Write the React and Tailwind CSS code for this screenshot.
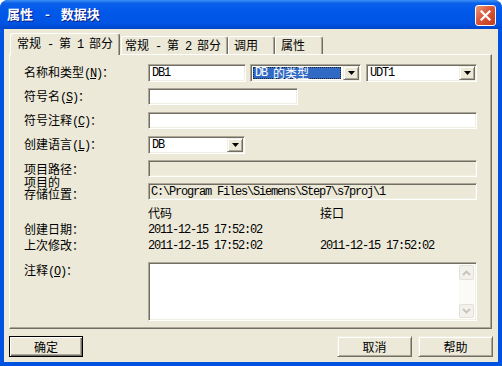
import React from 'react';

// sunken / raised edges in the classic look
const sunken = "border border-t-[#ACA899] border-l-[#ACA899] border-b-white border-r-white shadow-[inset_1px_1px_0_#716F64,inset_-1px_-1px_0_#F1EFE2]";
const raised = "border border-t-[#F1EFE2] border-l-[#F1EFE2] border-b-[#716F64] border-r-[#716F64] shadow-[inset_1px_1px_0_#fff,inset_-1px_-1px_0_#ACA899] bg-[#ECE9D8]";

const M = ({ children }) => (
  <span className="font-['Liberation_Mono',monospace] text-[12px] tracking-[-1.2px] whitespace-pre">{children}</span>
);

const Key = ({ k }) => (
  <M>(<u className="underline-offset-1">{k}</u>)</M>
);

function Arrow() {
  return (
    <div className={`${raised} w-[16px] my-[1px] mr-[1px] flex items-center justify-center`}>
      <svg width="7" height="4" viewBox="0 0 7 4"><path d="M0 0h7L3.5 4z" fill="#000" /></svg>
    </div>
  );
}

function Select({ w, children, focus }) {
  return (
    <div className={`${sunken} ${w} h-[18px] bg-white flex items-stretch`}>
      {focus ? (
        <div className="flex-1 m-[2px] mr-[2px] flex items-center pl-[1px] bg-[#316AC5] text-white border border-dotted border-[#222] leading-[12px] whitespace-nowrap">
          {children}
        </div>
      ) : (
        <div className="flex-1 flex items-center pl-[3px] whitespace-nowrap">{children}</div>
      )}
      <Arrow />
    </div>
  );
}

function Row({ label, className = '', children }) {
  return (
    <div className={`flex items-center ${className}`}>
      <div className="w-[124px] whitespace-nowrap leading-[14px]">{label}</div>
      {children}
    </div>
  );
}

function Chevron({ up }) {
  return (
    <svg width="9" height="6" viewBox="0 0 9 6">
      <polyline points={up ? "1,5 4.5,1.5 8,5" : "1,1 4.5,4.5 8,1"} fill="none" stroke="#C4C3BC" strokeWidth="1.8" />
    </svg>
  );
}

export default function App() {
  return (
    <div className="w-[502px] h-[366px] bg-[#0053E1] rounded-t-[8px] overflow-hidden flex flex-col font-['Noto_Sans_CJK_SC',sans-serif] text-[12px] text-black">
      {/* title bar */}
      <div className="h-[29px] shrink-0 flex items-start justify-between pl-[7px] pr-[6px] bg-[linear-gradient(to_bottom,#3C8EF3_0%,#0A5FEA_12%,#0058EA_45%,#0054E3_80%,#0046CB_100%)]">
        <div className="pt-[5px] text-white font-bold text-[13px] leading-[18px] whitespace-nowrap [text-shadow:1px_1px_0_#0A1883]">
          属性<span className="ml-[12px] mr-[11px]">-</span>数据块
        </div>
        <div className="mt-[5px] w-[21px] h-[21px] rounded-[3px] border border-white bg-[linear-gradient(135deg,#EC9A7C_0%,#D9583A_45%,#C23A1C_100%)] flex items-center justify-center">
          <svg width="11" height="11" viewBox="0 0 11 11">
            <path d="M1.5 1.5l8 8M9.5 1.5l-8 8" stroke="#fff" strokeWidth="2.2" strokeLinecap="square" />
          </svg>
        </div>
      </div>

      {/* client */}
      <div className="mx-[4px] h-[333px] bg-[#ECE9D8] flex flex-col">
        {/* tabs */}
        <div className="h-[25px] flex items-end pl-[6px]">
          <div className="relative z-10 w-[110px] h-[22px] -mb-[1px] bg-[#ECE9D8] border-t border-l border-white border-r border-r-[#716F64] rounded-t-[3px] shadow-[inset_-1px_0_0_#ACA899] pl-[6px] pt-[2px] leading-[14px] whitespace-nowrap">
            常规<M> - </M>第<M> 1 </M>部分
          </div>
          <div className="ml-[1px] w-[107px] h-[18px] border-t border-l border-white border-r border-r-[#716F64] rounded-t-[3px] shadow-[inset_-1px_0_0_#ACA899] pl-[3px] pt-[1px] leading-[14px] whitespace-nowrap">
            常规<M> - </M>第<M> 2 </M>部分
          </div>
          <div className="w-[47px] h-[18px] border-t border-l border-white border-r border-r-[#716F64] rounded-t-[3px] shadow-[inset_-1px_0_0_#ACA899] pl-[5px] pt-[1px] leading-[14px] whitespace-nowrap">
            调用
          </div>
          <div className="w-[48px] h-[18px] border-t border-l border-white border-r border-r-[#716F64] rounded-t-[3px] shadow-[inset_-1px_0_0_#ACA899] pl-[5px] pt-[1px] leading-[14px] whitespace-nowrap">
            属性
          </div>
        </div>

        {/* tab page */}
        <div className="ml-[5px] w-[483px] h-[275px] border border-t-white border-l-white border-r-[#716F64] border-b-[#716F64] shadow-[inset_-1px_-1px_0_#ACA899] pl-[14px] pt-[9px] flex flex-col">
          <Row className="h-[18px]" label={<>名称和类型<Key k="N" />：</>}>
            <div className={`${sunken} w-[98px] h-[18px] bg-white flex items-center pl-[3px]`}><M>DB1</M></div>
            <div className="ml-[4px]">
              <Select w="w-[111px]" focus><M>DB </M>的类型</Select>
            </div>
            <div className="ml-[5px]">
              <Select w="w-[111px]"><M>UDT1</M></Select>
            </div>
          </Row>

          <Row className="mt-[6px] h-[17px]" label={<>符号名<Key k="S" />：</>}>
            <div className={`${sunken} w-[150px] h-[17px] bg-white`} />
          </Row>

          <Row className="mt-[7px] h-[17px]" label={<>符号注释<Key k="C" />：</>}>
            <div className={`${sunken} w-[329px] h-[17px] bg-white`} />
          </Row>

          <Row className="mt-[7px] h-[18px]" label={<>创建语言<Key k="L" />：</>}>
            <Select w="w-[97px]"><M>DB</M></Select>
          </Row>

          <Row className="mt-[6px] h-[17px]" label="项目路径：">
            <div className={`${sunken} w-[329px] h-[17px] bg-[#ECE9D8]`} />
          </Row>

          <div className="h-[23px] flex items-end">
            <div className="w-[124px] leading-[12px] whitespace-nowrap">项目的<br />存储位置：</div>
            <div className={`${sunken} w-[329px] h-[17px] bg-[#ECE9D8] flex items-center pl-[2px]`}>
              <M>C:\Program Files\Siemens\Step7\s7proj\1</M>
            </div>
          </div>

          <div className="mt-[7px] h-[12px] flex items-center leading-[12px]">
            <div className="w-[124px]" />
            <div className="w-[172px]">代码</div>
            <div>接口</div>
          </div>

          <div className="mt-[4px] h-[12px] flex items-center leading-[12px]">
            <div className="w-[124px]">创建日期：</div>
            <div className="w-[172px]"><M>2011-12-15 17:52:02</M></div>
          </div>

          <div className="mt-[4px] h-[12px] flex items-center leading-[12px]">
            <div className="w-[124px]">上次修改：</div>
            <div className="w-[172px]"><M>2011-12-15 17:52:02</M></div>
            <div><M>2011-12-15 17:52:02</M></div>
          </div>

          <div className="mt-[11px] flex items-start">
            <div className="w-[124px] pt-[1px] leading-[14px] whitespace-nowrap">注释<Key k="O" />：</div>
            <div className={`${sunken} w-[329px] h-[59px] bg-white flex justify-end p-[2px]`}>
              <div className="w-[15px] flex flex-col justify-between bg-[#FBFAF7]">
                <div className="h-[15px] rounded-[2px] border border-[#E2E0D8] bg-[#F2F1EC] flex items-center justify-center">
                  <Chevron up />
                </div>
                <div className="h-[14px] rounded-[2px] border border-[#E2E0D8] bg-[#F2F1EC] flex items-center justify-center">
                  <Chevron />
                </div>
              </div>
            </div>
          </div>
        </div>

        {/* buttons */}
        <div className="mt-[7px] h-[21px] flex justify-between px-[5px]">
          <button className="w-[74px] h-[21px] bg-[#ECE9D8] border border-black shadow-[inset_1px_1px_0_#fff,inset_-1px_-1px_0_#716F64,inset_-2px_-2px_0_#ACA899] leading-[14px]">
            确定
          </button>
          <div className="flex gap-[6px]">
            <button className={`${raised} w-[75px] h-[21px] leading-[14px]`}>取消</button>
            <button className={`${raised} w-[75px] h-[21px] leading-[14px]`}>帮助</button>
          </div>
        </div>
      </div>
    </div>
  );
}
